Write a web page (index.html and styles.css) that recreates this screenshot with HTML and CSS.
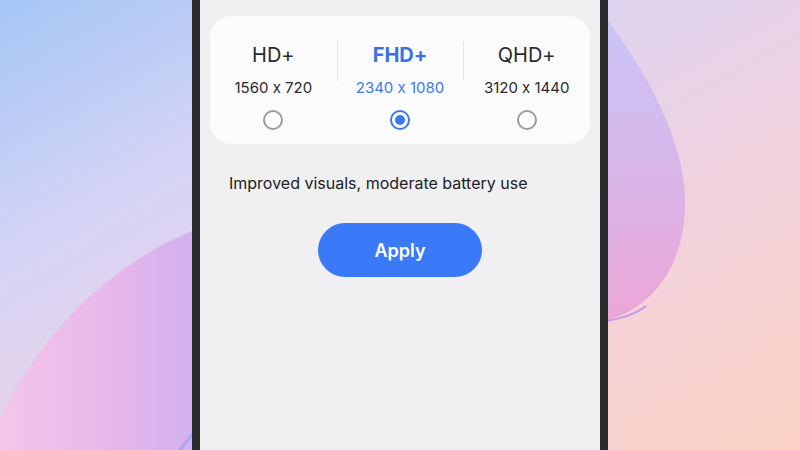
FILE: index.html
```html
<!DOCTYPE html>
<html lang="en">
<head>
  <meta charset="UTF-8">
  <title>Screen resolution</title>
  <link rel="stylesheet" href="styles.css">
</head>
<body>

  <svg class="wallpaper" viewBox="0 0 800 450" width="800" height="450">
    <defs>
      <linearGradient id="fondo" x1="0" y1="0" x2="1" y2="1">
        <stop offset="0" stop-color="#a5c6f6"/>
        <stop offset="0.3" stop-color="#d6d4f5"/>
        <stop offset="0.6" stop-color="#efd2e2"/>
        <stop offset="1" stop-color="#fcd2c4"/>
      </linearGradient>
      <linearGradient id="manchaIzq" x1="0" y1="0" x2="1" y2="0">
        <stop offset="0" stop-color="#f3c6ea"/>
        <stop offset="0.6" stop-color="#e6b6ea"/>
        <stop offset="1" stop-color="#cfb0ee"/>
      </linearGradient>
      <linearGradient id="manchaDer" x1="0" y1="0" x2="0" y2="1">
        <stop offset="0" stop-color="#c8c6f6"/>
        <stop offset="0.5" stop-color="#d8b6ea"/>
        <stop offset="1" stop-color="#eca6d6"/>
      </linearGradient>
    </defs>
    <rect width="800" height="450" fill="url(#fondo)"/>
    <path d="M0,418 C40,335 110,262 200,228 L200,450 L0,450 Z" fill="url(#manchaIzq)"/>
    <path d="M180,450 L196,430" stroke="#a9a6ec" stroke-width="3"/>
    <path d="M600,10 C640,62 688,140 685,210 C682,272 648,312 600,322 Z" fill="url(#manchaDer)"/>
    <path d="M606,321 C624,318 636,314 646,306" stroke="#c69ae6" stroke-width="2" fill="none"/>
  </svg>

  <div class="phone">
    <div class="screen">

      <div class="card">
        <div class="option">
          <div class="option-title">HD+</div>
          <div class="option-res">1560 x 720</div>
          <span class="radio"></span>
        </div>
        <div class="option selected">
          <div class="option-title">FHD+</div>
          <div class="option-res">2340 x 1080</div>
          <span class="radio"></span>
        </div>
        <div class="option">
          <div class="option-title">QHD+</div>
          <div class="option-res">3120 x 1440</div>
          <span class="radio"></span>
        </div>
      </div>

      <p class="descripcion">Improved visuals, moderate battery use</p>

      <button class="apply-btn">Apply</button>

    </div>
  </div>

</body>
</html>
```

FILE: styles.css
```css
* {
  box-sizing: border-box;
}

body {
  margin: 0;
  width: 800px;
  height: 450px;
  overflow: hidden;
  position: relative;
  font-family: 'Inter', 'Noto Sans', sans-serif;
  font-feature-settings: "calt" 0;
  color: #222;
  display: flex;
  justify-content: center;
}

.wallpaper {
  position: absolute;
  top: 0;
  left: 0;
}

.phone {
  position: relative;
  width: 416px;
  height: 450px;
  border-left: 8px solid #2a2a2a;
  border-right: 8px solid #2a2a2a;
}

.screen {
  height: 100%;
  background-color: #f0f0f2;
  padding: 16px 10px 0;
  display: flex;
  flex-direction: column;
}

.card {
  background-color: #fbfbfd;
  border-radius: 22px;
  height: 128px;
  padding: 26px 0 14px;
  display: grid;
  grid-template-columns: 1fr 1fr 1fr;
}

.option {
  position: relative;
  display: flex;
  flex-direction: column;
  align-items: center;
}

.option + .option::before {
  content: "";
  position: absolute;
  left: 0;
  top: -1px;
  width: 1px;
  height: 40px;
  background-color: #e4e4e6;
}

.option-title {
  font-size: 20px;
  line-height: 26px;
  color: #2a2a2a;
}

.option-res {
  margin-top: 10px;
  font-size: 15px;
  line-height: 20px;
  color: #2a2a2a;
}

.radio {
  margin-top: 12px;
  width: 20px;
  height: 20px;
  border-radius: 50%;
  border: 2px solid #9c9c9e;
  display: flex;
  justify-content: center;
  align-items: center;
}

.selected .option-title {
  font-weight: 700;
  color: #3a72e4;
}

.selected .option-res {
  color: #3b7ae8;
}

.selected .radio {
  border: 2.5px solid #3b79f2;
}

.selected .radio::after {
  content: "";
  width: 10px;
  height: 10px;
  border-radius: 50%;
  background-color: #3b79f2;
}

.descripcion {
  margin: 29px 0 0 19px;
  font-size: 16px;
  line-height: 20px;
  color: #222;
}

.apply-btn {
  margin: 30px auto 0;
  width: 164px;
  height: 54px;
  border: none;
  border-radius: 27px;
  background-color: #3a7af8;
  color: #fff;
  font-family: inherit;
  font-size: 18px;
  font-weight: 600;
}
```
